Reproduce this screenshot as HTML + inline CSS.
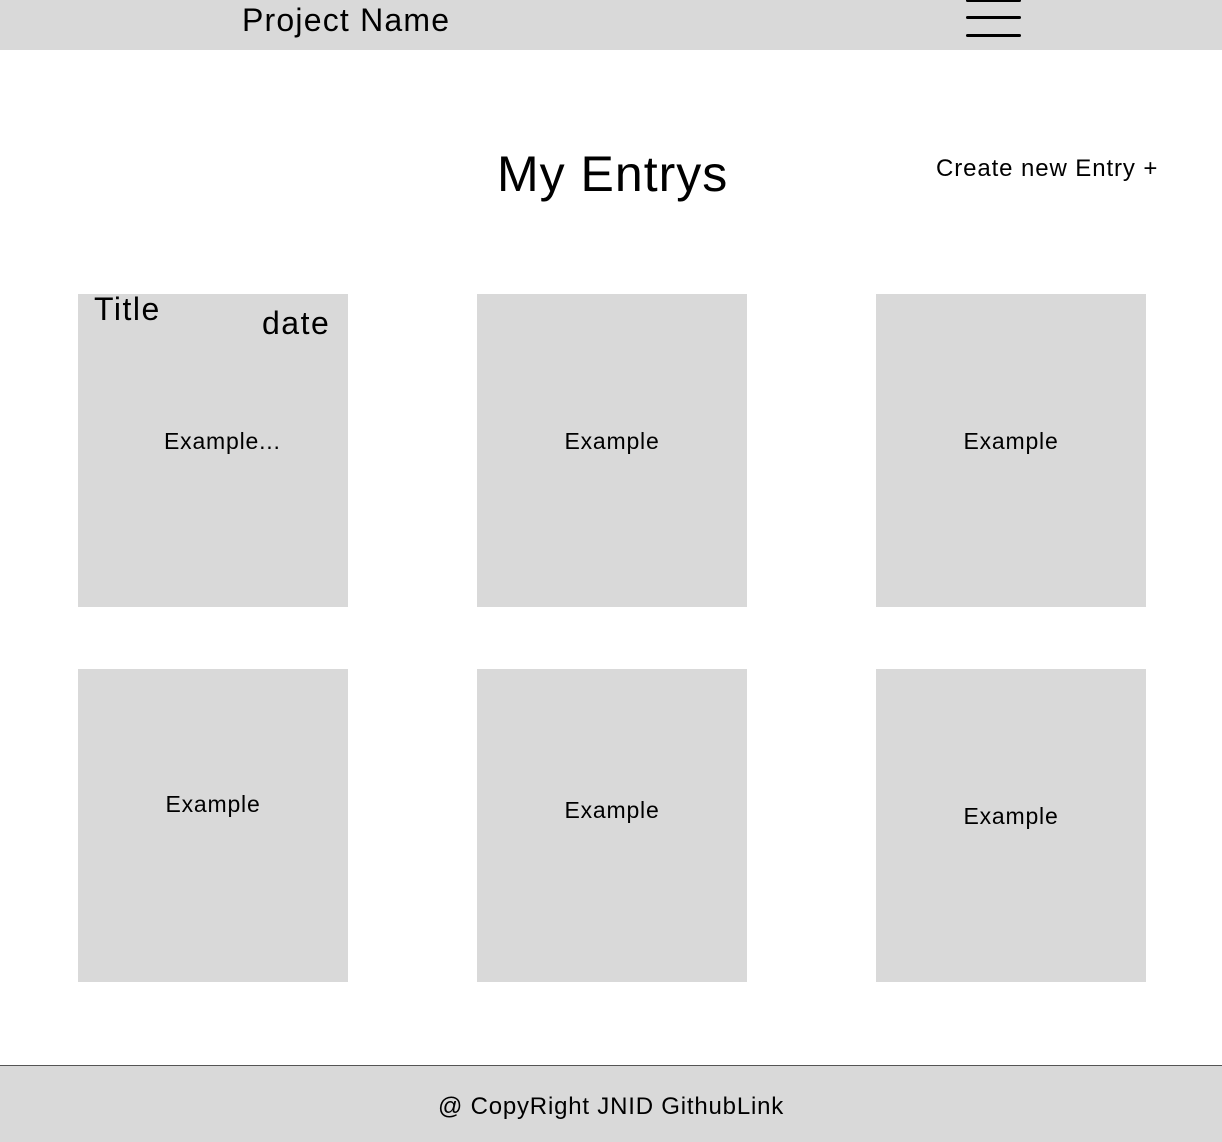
<!DOCTYPE html>
<html><head><style>
body{margin:0;width:1222px;height:1142px;position:relative;background:#fff;font-family:"Liberation Sans",sans-serif;color:#000;overflow:hidden}
.a{position:absolute;white-space:nowrap}
.hd{position:absolute;left:0;top:0;width:1222px;height:50px;background:#d9d9d9}
.ln{position:absolute;left:966px;width:55px;height:3px;background:#000;border-radius:2px}
.c{position:absolute;width:270px;height:313px;background:#d9d9d9}
.t{position:absolute;font-size:23px;width:100%;text-align:center;letter-spacing:0.8px}
.ft{position:absolute;left:0;top:1065px;width:1222px;height:77px;background:#d9d9d9;border-top:1px solid #555;box-sizing:border-box}
</style></head><body>
<div class="hd"></div>
<div class="a" style="left:242px;top:2px;font-size:32px;letter-spacing:1.2px">Project Name</div>
<div class="ln" style="top:-1px"></div>
<div class="ln" style="top:16px"></div>
<div class="ln" style="top:34px"></div>
<div class="a" style="left:497px;top:145px;font-size:50px;letter-spacing:1px">My Entrys</div>
<div class="a" style="left:936px;top:155px;font-size:24px;letter-spacing:0.9px">Create new Entry +</div>

<div class="c" style="left:78px;top:294px">
<div class="a" style="left:16px;top:-3px;font-size:32px;letter-spacing:1.5px">Title</div>
<div class="a" style="left:184px;top:11px;font-size:32px;letter-spacing:1.5px">date</div>
<div class="a" style="left:86px;top:134px;font-size:23px;letter-spacing:0.8px">Example...</div>
</div>
<div class="c" style="left:477px;top:294px"><div class="t" style="top:134px">Example</div></div>
<div class="c" style="left:876px;top:294px"><div class="t" style="top:134px">Example</div></div>
<div class="c" style="left:78px;top:669px"><div class="t" style="top:122px">Example</div></div>
<div class="c" style="left:477px;top:669px"><div class="t" style="top:128px">Example</div></div>
<div class="c" style="left:876px;top:669px"><div class="t" style="top:134px">Example</div></div>

<div class="ft"></div>
<div class="a" style="left:0;width:1222px;text-align:center;top:1093px;font-size:24px;letter-spacing:0.8px">@ CopyRight JNID GithubLink</div>
</body></html>
